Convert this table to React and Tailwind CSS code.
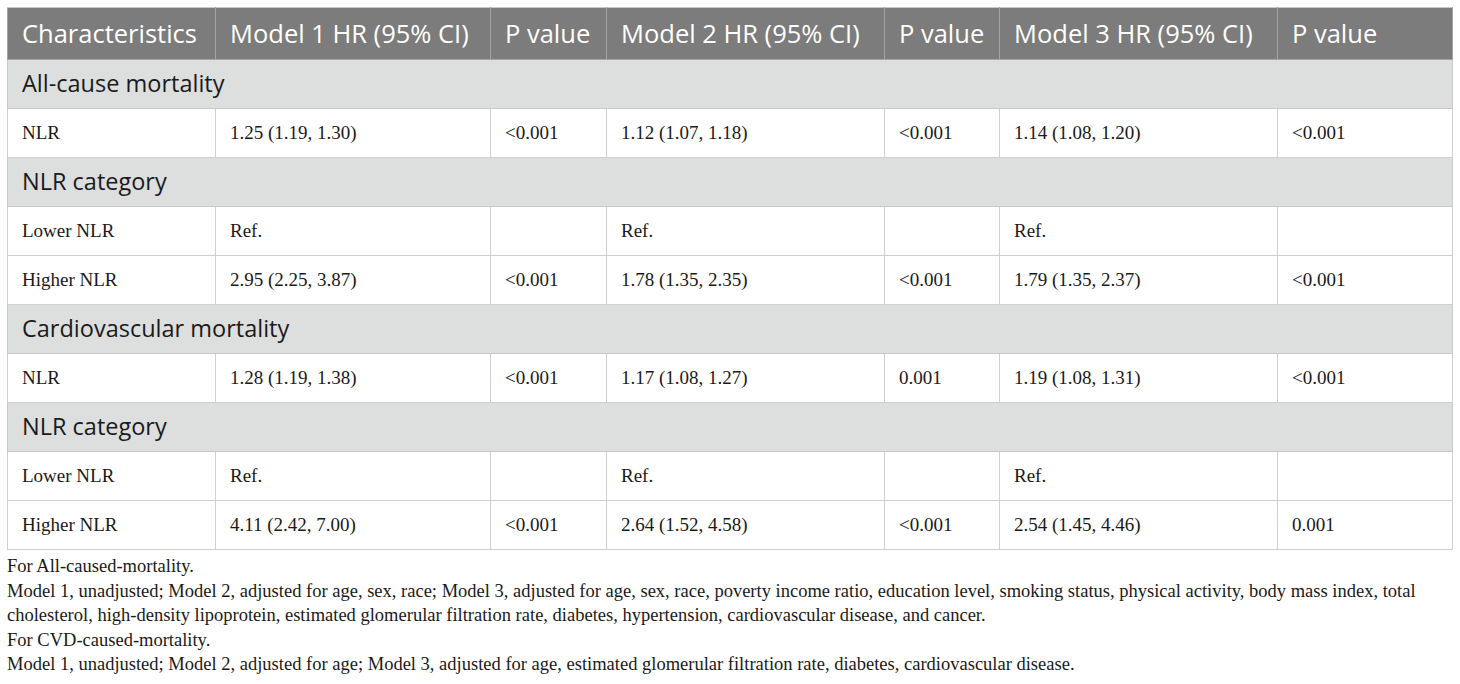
import React from "react";

const head = ["Characteristics", "Model 1 HR (95% CI)", "P value", "Model 2 HR (95% CI)", "P value", "Model 3 HR (95% CI)", "P value"];
const widths = ["w-[208px]", "w-[275px]", "w-[116px]", "w-[278px]", "w-[115px]", "w-[278px]", "w-[175px]"];

const rows = [
  { section: "All-cause mortality" },
  { cells: ["NLR", "1.25 (1.19, 1.30)", "<0.001", "1.12 (1.07, 1.18)", "<0.001", "1.14 (1.08, 1.20)", "<0.001"] },
  { section: "NLR category" },
  { cells: ["Lower NLR", "Ref.", "", "Ref.", "", "Ref.", ""] },
  { cells: ["Higher NLR", "2.95 (2.25, 3.87)", "<0.001", "1.78 (1.35, 2.35)", "<0.001", "1.79 (1.35, 2.37)", "<0.001"] },
  { section: "Cardiovascular mortality" },
  { cells: ["NLR", "1.28 (1.19, 1.38)", "<0.001", "1.17 (1.08, 1.27)", "0.001", "1.19 (1.08, 1.31)", "<0.001"] },
  { section: "NLR category" },
  { cells: ["Lower NLR", "Ref.", "", "Ref.", "", "Ref.", ""] },
  { cells: ["Higher NLR", "4.11 (2.42, 7.00)", "<0.001", "2.64 (1.52, 4.58)", "<0.001", "2.54 (1.45, 4.46)", "0.001"] },
];

const notes = [
  "For All-caused-mortality.",
  "Model 1, unadjusted; Model 2, adjusted for age, sex, race; Model 3, adjusted for age, sex, race, poverty income ratio, education level, smoking status, physical activity, body mass index, total cholesterol, high-density lipoprotein, estimated glomerular filtration rate, diabetes, hypertension, cardiovascular disease, and cancer.",
  "For CVD-caused-mortality.",
  "Model 1, unadjusted; Model 2, adjusted for age; Model 3, adjusted for age, estimated glomerular filtration rate, diabetes, cardiovascular disease.",
];

export default function App() {
  return (
    <div className="bg-white w-[1460px] h-[684px] pt-[7px] px-[7px]">
      <table className="border-collapse table-fixed w-[1445px]">
        <thead>
          <tr className="bg-[#7b7c7b] h-[52px]">
            {head.map((h, i) => (
              <th
                key={i}
                className={`${widths[i]} border border-[#a3a4a3] border-t-[#c9c9c9] px-[14px] text-left font-normal text-white text-[25.5px] font-['Open_Sans',sans-serif] whitespace-nowrap`}
              >
                {h}
              </th>
            ))}
          </tr>
        </thead>
        <tbody>
          {rows.map((r, i) =>
            r.section ? (
              <tr key={i} className="bg-[#dddede] h-[49px]">
                <td colSpan={7} className="border border-[#c9c9c9] px-[14px] text-[23.5px] text-[#1a1a1a] font-['Open_Sans',sans-serif]">
                  {r.section}
                </td>
              </tr>
            ) : (
              <tr key={i} className="h-[49px]">
                {r.cells.map((c, j) => (
                  <td key={j} className="border border-[#cfcfcf] px-[14px] text-[19px] text-[#1a1a1a] font-['Liberation_Serif',serif] whitespace-nowrap">
                    {c}
                  </td>
                ))}
              </tr>
            )
          )}
        </tbody>
      </table>
      <div className="pt-[4px] text-[18.5px] leading-[24.5px] text-[#1a1a1a] font-['Liberation_Serif',serif]">
        {notes.map((n, i) => (
          <p key={i}>{n}</p>
        ))}
      </div>
    </div>
  );
}
